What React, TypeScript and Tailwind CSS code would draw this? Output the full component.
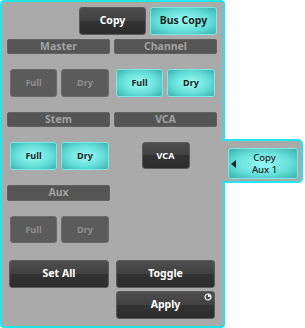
import React from 'react';

type Variant = 'dark' | 'cyan' | 'off';

const styles: Record<Variant, string> = {
  dark: 'bg-[linear-gradient(#4d4d4d,#414141_50%,#333333_50%,#2c2c2c)] border-[#5a5a5a] text-white',
  cyan: 'bg-[radial-gradient(ellipse_at_center,#8ff5f0_15%,#62dcd8_60%,#3ab0ad_100%)] border-[#7ee8e6] text-[#1c2626]',
  off: 'bg-[#5b5b5b] border-[#6a6a6a] text-[#8f8f8f]',
};

function Btn({ label, variant, w, h = 28, small }: { label: string; variant: Variant; w: number; h?: number; small?: boolean }) {
  return (
    <div
      className={`flex items-center justify-center rounded-[3px] border font-bold ${small ? 'text-[9px]' : 'text-[10.5px]'} ${styles[variant]}`}
      style={{ width: w, height: h }}
    >
      {label}
    </div>
  );
}

function Header({ label, h = 15 }: { label: string; h?: number }) {
  return (
    <div
      className="flex w-[103px] items-center justify-center rounded-[2px] border border-[#606060] bg-[#555555] text-[10.5px] font-bold text-[#a2a2a2]"
      style={{ height: h }}
    >
      {label}
    </div>
  );
}

function Pair({ variant }: { variant: Variant }) {
  return (
    <div className="flex gap-[4px]">
      <Btn label="Full" variant={variant} w={47} small />
      <Btn label="Dry" variant={variant} w={48} small />
    </div>
  );
}

export default function App() {
  return (
    <div className="flex h-[328px] w-[305px] items-start bg-white font-['Noto_Sans',sans-serif]">
      <div className="h-[328px] w-[225px] shrink-0 rounded-[4px] border-2 border-[#22e6ee] bg-[#aaaaaa] pl-[5px] pt-[5px]">
        <div className="flex w-[210px] justify-end gap-[4px]">
          <Btn label="Copy" variant="dark" w={67} />
          <Btn label="Bus Copy" variant="cyan" w={67} />
        </div>

        <div className="mt-[4px] flex gap-[4px]">
          <Header label="Master" />
          <Header label="Channel" />
        </div>
        <div className="mt-[15px] flex">
          <div className="w-[107px] pl-[3px]">
            <Pair variant="off" />
          </div>
          <div className="pl-[2px]">
            <Pair variant="cyan" />
          </div>
        </div>

        <div className="mt-[15px] flex gap-[4px]">
          <Header label="Stem" />
          <Header label="VCA" />
        </div>
        <div className="mt-[15px] flex">
          <div className="w-[107px] pl-[3px]">
            <Pair variant="cyan" />
          </div>
          <div className="flex w-[103px] justify-center">
            <Btn label="VCA" variant="dark" w={48} h={27} small />
          </div>
        </div>

        <div className="mt-[15px]">
          <Header label="Aux" h={16} />
        </div>
        <div className="mt-[15px] pl-[3px]">
          <div className="flex gap-[4px]">
            <Btn label="Full" variant="off" w={47} h={27} small />
            <Btn label="Dry" variant="off" w={48} h={27} small />
          </div>
        </div>

        <div className="mt-[17px] flex">
          <div className="w-[109px] pl-[2px]">
            <Btn label="Set All" variant="dark" w={100} />
          </div>
          <div className="flex flex-col gap-[3px]">
            <Btn label="Toggle" variant="dark" w={99} />
            <div className="relative">
              <Btn label="Apply" variant="dark" w={99} />
              <svg className="absolute right-[3px] top-[2px]" width="8" height="8" viewBox="0 0 8 8">
                <circle cx="4" cy="4" r="3" fill="none" stroke="#ffffff" strokeWidth="1.2" />
                <path d="M4 4 V1 A3 3 0 0 1 7 4 Z" fill="#ffffff" />
              </svg>
            </div>
          </div>
        </div>
      </div>

      <div className="relative -ml-[3px] mt-[139px] flex h-[44px] w-[81px] items-start rounded-r-[5px] border-y-2 border-r-2 border-[#22e6ee] bg-[#aaaaaa] pl-[6px] pt-[7px]">
        <div className="relative flex h-[31px] w-[70px] flex-col items-center justify-center rounded-[3px] border border-[#7ee8e6] bg-[radial-gradient(ellipse_at_center,#8ff5f0_15%,#62dcd8_60%,#3ab0ad_100%)] pl-[3px] text-center text-[9.5px] font-medium leading-[12px] text-[#1c2626]">
          <span className="absolute left-[2px] top-1/2 -translate-y-1/2 border-y-[4px] border-r-[5px] border-y-transparent border-r-[#1c2626]" />
          <div>Copy</div>
          <div>Aux 1</div>
        </div>
      </div>
    </div>
  );
}
